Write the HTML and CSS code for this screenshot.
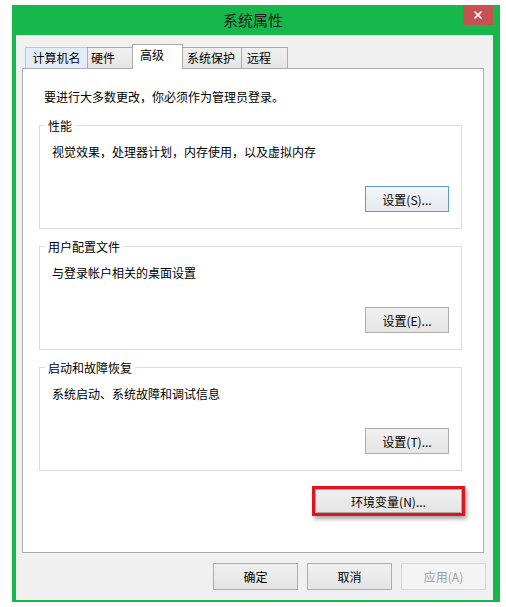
FILE: index.html
```html
<!DOCTYPE html>
<html lang="zh-CN">
<head>
<meta charset="utf-8">
<title>系统属性</title>
<link rel="stylesheet" href="styles.css">
</head>
<body>
<div class="window">
  <div class="titlebar">
    <div class="title">系统属性</div>
    <button class="close" aria-label="关闭"><svg width="10" height="10" viewBox="0 0 10 10"><path d="M1.5 1.5 L8.5 8.5 M8.5 1.5 L1.5 8.5" stroke="#fff" stroke-width="1.7" fill="none"/></svg></button>
  </div>
  <div class="client">
    <div class="tabs">
      <div class="tab tab-hover t1">计算机名</div>
      <div class="tab t2">硬件</div>
      <div class="tab tab-active t3">高级</div>
      <div class="tab t4">系统保护</div>
      <div class="tab t5">远程</div>
    </div>
    <div class="panel">
      <p class="note">要进行大多数更改，你必须作为管理员登录。</p>
      <fieldset class="group">
        <legend>性能</legend>
        <p class="desc">视觉效果，处理器计划，内存使用，以及虚拟内存</p>
        <button class="btn btn-default btn-set">设置(S)...</button>
      </fieldset>
      <fieldset class="group">
        <legend>用户配置文件</legend>
        <p class="desc">与登录帐户相关的桌面设置</p>
        <button class="btn btn-set">设置(E)...</button>
      </fieldset>
      <fieldset class="group">
        <legend>启动和故障恢复</legend>
        <p class="desc">系统启动、系统故障和调试信息</p>
        <button class="btn btn-set">设置(T)...</button>
      </fieldset>
      <button class="btn btn-env">环境变量(N)...</button>
    </div>
    <div class="actions">
      <button class="btn btn-action">确定</button>
      <button class="btn btn-action">取消</button>
      <button class="btn btn-action btn-disabled">应用(A)</button>
    </div>
  </div>
</div>
</body>
</html>
```

FILE: styles.css
```css
* { box-sizing: border-box; }
html, body { margin: 0; }
body {
  background: #fff;
  padding: 5px 6px 0 12px;
  font-family: "Noto Sans CJK SC", "Microsoft YaHei", sans-serif;
  font-size: 12px;
  color: #000;
}
.window {
  width: 488px;
  background: #17b84b;
  display: flex;
  flex-direction: column;
  padding: 0 7px 2px 4px;
}
.titlebar {
  height: 30px;
  display: flex;
  align-items: flex-start;
}
.title {
  flex: 1;
  text-align: center;
  font-size: 15px;
  line-height: 30px;
  color: #1f1f1f;
  padding-left: 27px;
}
.close {
  width: 30px;
  height: 20px;
  border: none;
  padding: 0;
  background: #c75050;
  display: flex;
  align-items: center;
  justify-content: center;
}
.client {
  height: 565px;
  background: #f0f0f0;
  padding: 9px 9px 10px 6px;
  display: flex;
  flex-direction: column;
}
.tabs {
  display: flex;
  align-items: flex-end;
  height: 24px;
  padding-left: 3px;
}
.tab {
  height: 21px;
  border: 1px solid #acacac;
  border-bottom: none;
  background: linear-gradient(#f0f0f0, #e5e5e5);
  line-height: 20px;
  margin-left: -1px;
  white-space: nowrap;
}
.t1 {
  width: 63px;
  margin-left: 0;
  text-align: center;
  background: #e3edf9;
  border-color: #b4c9e2;
}
.t2 { width: 47px; padding-left: 3px; }
.tab-active {
  width: 51px;
  height: 25px;
  margin-left: -2px;
  margin-bottom: -1px;
  background: #fff;
  position: relative;
  z-index: 1;
  padding-left: 7px;
}
.t4 { width: 60px; padding-left: 4px; }
.t5 { width: 47px; padding-left: 5px; }
.panel {
  background: #fff;
  border: 1px solid #acacac;
  padding: 20px 21px 39px 16px;
  display: flex;
  flex-direction: column;
}
.note {
  margin: 0 0 12px 5px;
  line-height: 16px;
}
.group {
  border: 1px solid #dcdcdc;
  margin: 0;
  padding: 10px 12px 16px 12px;
  display: flex;
  flex-direction: column;
  min-width: 0;
}
.group + .group { margin-top: 9px; }
.group legend {
  padding: 0 3px;
  margin-left: -7px;
  line-height: 17px;
  font-size: 12px;
}
.desc {
  margin: 0;
  line-height: 16px;
}
.btn {
  font-family: inherit;
  font-size: 12px;
  color: #000;
  border: 1px solid #acacac;
  background: linear-gradient(#f0f0f0, #e5e5e5);
  padding: 0;
  margin: 0;
}
.btn-set {
  align-self: flex-end;
  margin-top: 26px;
  width: 84px;
  height: 26px;
}
.btn-default {
  border-color: #5b9bd8;
  background: linear-gradient(#f3f6f9, #e6eaee);
}
.btn-env {
  align-self: flex-end;
  margin-top: 18px;
  width: 147px;
  height: 24px;
  box-shadow: 0 0 0 3px #e0141b, 2px 3px 4px 3px rgba(0, 0, 0, 0.35);
}
.actions {
  display: flex;
  justify-content: flex-end;
  gap: 9px;
  margin-top: 10px;
  margin-right: -2px;
}
.btn-action {
  width: 85px;
  height: 27px;
}
.btn-disabled {
  color: #9d9d9d;
  border-color: #d9d9d9;
  background: #f4f4f4;
}
```
